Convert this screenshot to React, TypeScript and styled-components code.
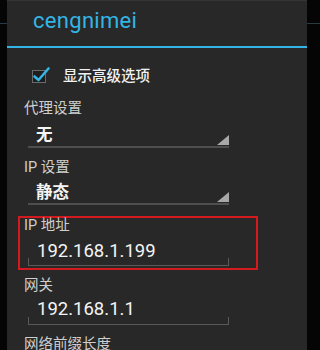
import React from "react";
import styled, { createGlobalStyle } from "styled-components";

const Global = createGlobalStyle`
  html, body { margin: 0; padding: 0; background: #000; overflow: hidden; }
  #root { width: 320px; height: 350px; }
`;

const BLUE = "#33b5e5";

const Screen = styled.div`
  width: 320px;
  height: 350px;
  background:
    linear-gradient(to bottom, transparent 23px, #2b3b44 23px, #2b3b44 24px, transparent 24px),
    #050505;
  display: flex;
  overflow: hidden;
`;

const Dialog = styled.div`
  margin-left: 7px;
  width: 300px;
  height: 350px;
  background: #282828;
  border-top: 1px solid #343434;
  box-sizing: border-box;
  display: flex;
  flex-direction: column;
  overflow: hidden;
  & > * { flex-shrink: 0; }
`;

const TitleBar = styled.div`
  height: 45px;
  box-sizing: border-box;
  padding: 0 0 7px 26px;
  display: flex;
  align-items: center;
  color: ${BLUE};
  font-family: Roboto, "Liberation Sans", sans-serif;
  font-size: 22px;
  letter-spacing: 0.3px;
`;

const Divider = styled.div`
  height: 2px;
  background: ${BLUE};
`;

const Body = styled.div`
  padding-left: 17px;
  display: flex;
  flex-direction: column;
  font-family: "Noto Sans CJK SC", Roboto, sans-serif;
  & > * { flex-shrink: 0; }
`;

const CheckRow = styled.div`
  margin-top: 17px;
  height: 20px;
  display: flex;
  align-items: center;
  gap: 11px;
  padding-left: 8px;
`;

const CheckText = styled.span`
  color: #f2f2f2;
  font-size: 14.5px;
  font-weight: 500;
  line-height: 20px;
`;

const Label = styled.div<{ $mt: number }>`
  margin-top: ${(p) => p.$mt}px;
  height: 18px;
  line-height: 18px;
  color: #cfcfcf;
  font-size: 14.5px;
  font-family: Roboto, "Noto Sans CJK SC", sans-serif;
`;

const Spinner = styled.div<{ $pt: number }>`
  margin-left: 4px;
  width: 201px;
  box-sizing: border-box;
  padding: ${(p) => p.$pt}px 0 1px 8px;
  border-bottom: 2px solid #4e4e4e;
  display: flex;
  align-items: flex-end;
  justify-content: space-between;
`;

const SpinnerValue = styled.span`
  color: #f4f4f4;
  font-size: 16.5px;
  font-weight: 600;
  line-height: 20px;
  margin-bottom: 1px;
`;

const Edit = styled.div<{ $pt: number; $pb: number }>`
  margin-left: 4px;
  width: 201px;
  box-sizing: border-box;
  padding: ${(p) => p.$pt}px 0 ${(p) => p.$pb}px 8px;
  border-bottom: 1px solid #5a5a5a;
  border-left: 1px solid #4a4a4a;
  border-right: 1px solid #4a4a4a;
  border-image: linear-gradient(to bottom, transparent 75%, #5a5a5a 75%) 1;
`;

const EditValue = styled.span`
  display: block;
  color: #f4f4f4;
  font-family: Roboto, "Liberation Sans", sans-serif;
  font-size: 18.5px;
  line-height: 22px;
`;

const Highlight = styled.div`
  margin-top: 11px;
  margin-left: -6px;
  width: 240px;
  height: 54px;
  box-sizing: border-box;
  border: 2px solid #d41a1f;
  padding-left: 4px;
  display: flex;
  flex-direction: column;
  & > * { flex-shrink: 0; }
`;

const Caret = () => (
  <svg width="12" height="10" viewBox="0 0 12 10">
    <polygon points="12,0 12,10 0,10" fill="#a8a8a8" />
  </svg>
);

const CheckIcon = () => (
  <svg width="20" height="18" viewBox="0 0 20 18">
    <rect x="0.5" y="4.5" width="13" height="12" fill="#1e1e1e" stroke="#6a6a6a" />
    <path d="M2.5 10.5 L6.5 14 L16.5 2.5" fill="none" stroke={BLUE} strokeWidth="2.6" strokeLinecap="round" strokeLinejoin="round" />
  </svg>
);

export default function App() {
  return (
    <>
      <Global />
      <Screen>
        <Dialog>
          <TitleBar>cengnimei</TitleBar>
          <Divider />
          <Body>
            <CheckRow>
              <CheckIcon />
              <CheckText>显示高级选项</CheckText>
            </CheckRow>
            <Label $mt={15}>代理设置</Label>
            <Spinner $pt={6}>
              <SpinnerValue>无</SpinnerValue>
              <Caret />
            </Spinner>
            <Label $mt={11}>IP 设置</Label>
            <Spinner $pt={4}>
              <SpinnerValue>静态</SpinnerValue>
              <Caret />
            </Spinner>
            <Highlight>
              <Label $mt={-1}>IP 地址</Label>
              <Edit $pt={5} $pb={3}>
                <EditValue>192.168.1.199</EditValue>
              </Edit>
            </Highlight>
            <Label $mt={7}>网关</Label>
            <Edit $pt={3} $pb={4}>
              <EditValue>192.168.1.1</EditValue>
            </Edit>
            <Label $mt={11}>网络前缀长度</Label>
          </Body>
        </Dialog>
      </Screen>
    </>
  );
}
